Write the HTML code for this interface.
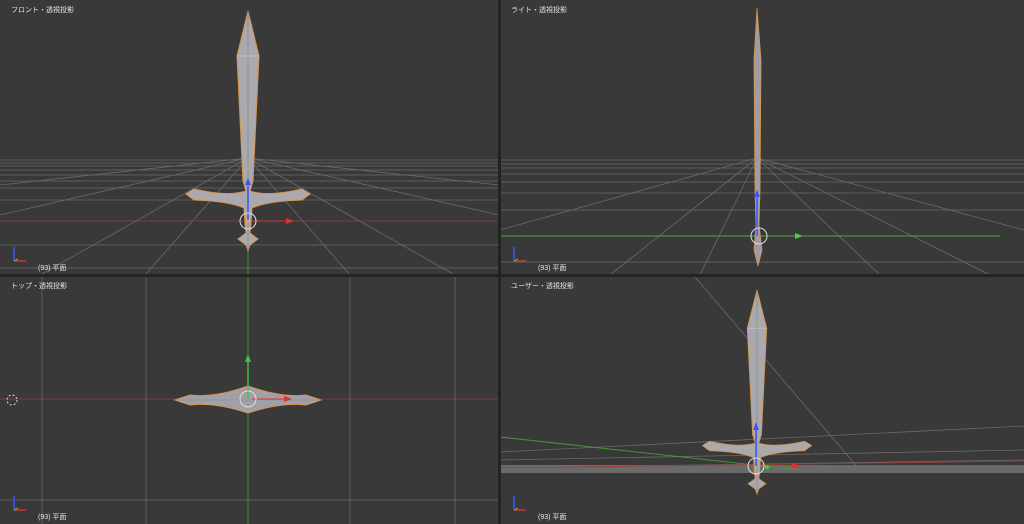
<!DOCTYPE html>
<html><head><meta charset="utf-8"><style>
html,body{margin:0;padding:0;background:#393939;overflow:hidden}
svg{display:block}
text{font-family:"Liberation Sans","Noto Sans CJK JP",sans-serif;fill:#e6e6e6;font-size:7px}
</style></head><body>
<svg width="1024" height="524" viewBox="0 0 1024 524" xmlns="http://www.w3.org/2000/svg">
<defs>
<g id="sword">
<path d="M0,0 L11,45 L5,170 L2,180 Q20,186 54,178 L62,183 L54,189 Q20,190 4,197 L3,212 L2,222 L10,228 L2,234 L0,240 L-2,234 L-10,228 L-2,222 L-3,212 L-4,197 Q-20,190 -54,189 L-62,183 L-54,178 Q-20,186 -2,180 L-5,170 L-11,45 Z" fill="#a9a9ae" stroke="#d9954a" stroke-width="1"/>
<path d="M0,0 L0,240" stroke="#8e8e94" stroke-width="1"/>
<path d="M-11,45 L11,45" stroke="#c4c4c8" stroke-width="0.8"/>
</g>
<g id="axes">
<line x1="0" y1="0" x2="0" y2="-14" stroke="#3a54ff" stroke-width="1.5"/>
<line x1="0" y1="0" x2="12" y2="0" stroke="#e03030" stroke-width="1.5"/>
<line x1="0" y1="0" x2="4" y2="-2" stroke="#50c050" stroke-width="1"/>
</g>
</defs>
<rect width="1024" height="524" fill="#393939"/>
<!-- TL grid -->
<g stroke="#6a6a6a" stroke-width="0.8" fill="none">
<line x1="0" y1="160" x2="499" y2="160"/><line x1="0" y1="163" x2="499" y2="163"/>
<line x1="0" y1="166" x2="499" y2="166"/><line x1="0" y1="170" x2="499" y2="170"/>
<line x1="0" y1="175" x2="499" y2="175"/><line x1="0" y1="181" x2="499" y2="181"/>
<line x1="0" y1="188" x2="499" y2="188"/><line x1="0" y1="200" x2="499" y2="200"/>
<line x1="0" y1="245" x2="499" y2="245"/><line x1="0" y1="268" x2="499" y2="268"/>
<line x1="248" y1="158" x2="40" y2="275"/><line x1="248" y1="158" x2="145" y2="275"/>
<line x1="248" y1="158" x2="350" y2="275"/><line x1="248" y1="158" x2="455" y2="275"/>
<line x1="248" y1="158" x2="0" y2="215"/><line x1="248" y1="158" x2="499" y2="215"/>
<line x1="248" y1="158" x2="0" y2="185"/><line x1="248" y1="158" x2="499" y2="185"/>
</g>
<line x1="0" y1="221" x2="499" y2="221" stroke="#a03a3a" stroke-width="0.8"/>
<line x1="248" y1="210" x2="248" y2="524" stroke="#4a9a3a" stroke-width="0.8"/>
<use href="#sword" x="248" y="11"/>
<line x1="248" y1="221" x2="248" y2="184" stroke="#3a54ff" stroke-width="1.5"/><path d="M245,185 L248,178 L251,185Z" fill="#3a54ff"/>
<line x1="252" y1="221" x2="290" y2="221" stroke="#e03030" stroke-width="1"/><path d="M286,218 L294,221 L286,224Z" fill="#e03030"/>
<circle cx="248" cy="221" r="8" fill="none" stroke="#ddd" stroke-width="1"/>
<circle cx="248" cy="221" r="1.5" fill="#e8a040"/>
<!-- TR grid -->
<g stroke="#6a6a6a" stroke-width="0.8">
<line x1="500" y1="160" x2="1024" y2="160"/><line x1="500" y1="164" x2="1024" y2="164"/>
<line x1="500" y1="168" x2="1024" y2="168"/><line x1="500" y1="174" x2="1024" y2="174"/>
<line x1="500" y1="182" x2="1024" y2="182"/><line x1="500" y1="193" x2="1024" y2="193"/>
<line x1="500" y1="210" x2="1024" y2="210"/><line x1="500" y1="262" x2="1024" y2="262"/>
<line x1="757" y1="158" x2="610" y2="275"/><line x1="757" y1="158" x2="700" y2="275"/>
<line x1="757" y1="158" x2="880" y2="275"/><line x1="757" y1="158" x2="990" y2="275"/>
<line x1="757" y1="158" x2="500" y2="230"/><line x1="757" y1="158" x2="1024" y2="230"/>
</g>
<line x1="500" y1="236" x2="1000" y2="236" stroke="#4aaa3a" stroke-width="0.9"/>
<path d="M757,8 L761,60 L760,190 L759,225 L762,250 L758,266 L754,250 L756,225 L755,190 L754,60Z" fill="#9d9da8" stroke="#d9954a" stroke-width="0.8"/>
<line x1="757" y1="236" x2="757" y2="195" stroke="#3a54ff" stroke-width="1.5"/><path d="M754,197 L757,190 L760,197Z" fill="#3a54ff"/>
<path d="M795,233 L803,236 L795,239Z" fill="#40d040"/>
<circle cx="759" cy="236" r="8" fill="none" stroke="#ddd" stroke-width="1"/>
<!-- BL -->
<g stroke="#6a6a6a" stroke-width="0.8">
<line x1="42" y1="276" x2="42" y2="524"/><line x1="146" y1="276" x2="146" y2="524"/>
<line x1="350" y1="276" x2="350" y2="524"/><line x1="455" y1="276" x2="455" y2="524"/>
<line x1="0" y1="500" x2="499" y2="500"/>
</g>
<line x1="0" y1="399" x2="499" y2="399" stroke="#a03a3a" stroke-width="0.8"/>
<path d="M175,400 L190,395 Q215,398 248,386 Q281,398 306,395 L321,400 L306,405 Q281,402 248,413 Q215,402 190,405Z" fill="#a0a0a8" stroke="#d9954a" stroke-width="1"/>
<line x1="175" y1="400" x2="321" y2="400" stroke="#8a8a92" stroke-width="0.6"/>
<line x1="248" y1="399" x2="248" y2="360" stroke="#40c040" stroke-width="1.5"/><path d="M245,362 L248,354 L251,362Z" fill="#40c040"/>
<line x1="252" y1="399" x2="288" y2="399" stroke="#e03030" stroke-width="1"/><path d="M284,396 L292,399 L284,402Z" fill="#e03030"/>
<circle cx="248" cy="399" r="8" fill="none" stroke="#ddd" stroke-width="1"/>
<circle cx="12" cy="400" r="5" fill="none" stroke="#ddd" stroke-width="1" stroke-dasharray="2 2"/>
<!-- BR -->
<g stroke="#6a6a6a" stroke-width="0.8">
<line x1="695" y1="277" x2="860" y2="470"/>
<line x1="500" y1="452" x2="1024" y2="426"/>
<line x1="500" y1="460" x2="1024" y2="450"/>
<line x1="500" y1="468" x2="1024" y2="460"/>
</g>
<rect x="500" y="465" width="524" height="8" fill="#6a6a6a"/>
<line x1="500" y1="437" x2="800" y2="470" stroke="#4a9a3a" stroke-width="0.9"/>
<line x1="500" y1="468" x2="1024" y2="461" stroke="#a03a3a" stroke-width="0.8"/>
<g transform="translate(757,290) scale(0.88,0.85)"><use href="#sword"/></g>
<line x1="756" y1="466" x2="756" y2="428" stroke="#3a54ff" stroke-width="1.5"/><path d="M753,430 L756,422 L759,430Z" fill="#3a54ff"/>
<path d="M792,463 L800,466 L792,469Z" fill="#e03030"/>
<circle cx="767" cy="467" r="2" fill="#40d040"/>
<circle cx="756" cy="466" r="8" fill="none" stroke="#ddd" stroke-width="1"/>
<!-- dividers -->
<rect x="498" y="0" width="3" height="524" fill="#232323"/>
<rect x="0" y="274" width="1024" height="3" fill="#232323"/>
<!-- labels -->
<text x="11" y="12">フロント・透視投影</text>
<text x="511" y="12">ライト・透視投影</text>
<text x="11" y="288">トップ・透視投影</text>
<text x="511" y="288">ユーザー・透視投影</text>
<text x="38" y="270">(93) 平面</text>
<text x="538" y="270">(93) 平面</text>
<text x="38" y="519">(93) 平面</text>
<text x="538" y="519">(93) 平面</text>
<use href="#axes" x="14" y="261"/><use href="#axes" x="514" y="261"/>
<use href="#axes" x="14" y="510"/><use href="#axes" x="514" y="510"/>
</svg>
</body></html>
